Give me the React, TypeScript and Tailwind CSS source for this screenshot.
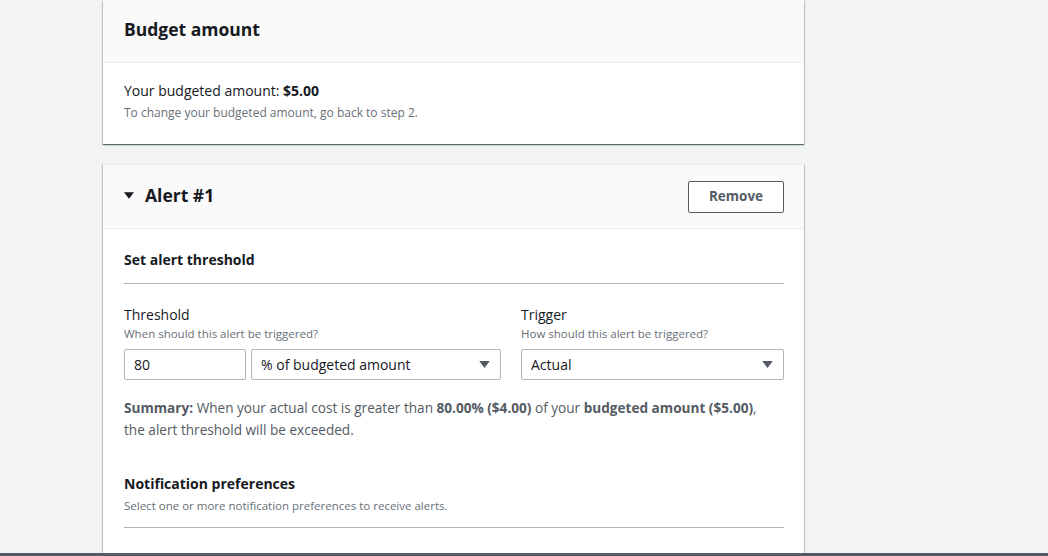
import React from 'react';

const font = { fontFamily: '"Open Sans", "Noto Sans", Arial, sans-serif' };

const Caret = ({ className }: { className?: string }) => (
    <svg viewBox="0 0 12 8" className={className} aria-hidden="true">
        <path d="M0 0 L12 0 L6 8 Z" fill="currentColor" />
    </svg>
);

const Select = ({ value, className }: { value: string; className?: string }) => (
    <div className={`flex h-[31px] items-center justify-between rounded-[2px] border border-[#aab7b8] bg-white pl-[9px] pr-[10px] text-[14px] text-[#16191f] ${className || ''}`}>
        <span>{value}</span>
        <Caret className="h-[7px] w-[11px] text-[#545b64]" />
    </div>
);

const cardShadow = 'shadow-[0_1px_1px_0_rgba(0,28,36,0.5),1px_1px_1px_0_rgba(0,28,36,0.15),-1px_1px_1px_0_rgba(0,28,36,0.15)]';

export default function App() {
    return (
        <div className="relative h-[556px] w-full overflow-hidden bg-[#f2f3f3]" style={font}>
            <div className="ml-[103px] flex w-[701px] flex-col gap-[20px]">
                <div className={`bg-white ${cardShadow}`}>
                    <div className="flex h-[63px] items-center border-b border-[#eaeded] bg-[#fafafa] pl-[21px] pr-[20px] pb-[3px]">
                        <h2 className="text-[17.5px] font-bold text-[#16191f]">Budget amount</h2>
                    </div>
                    <div className="pl-[21px] pr-[20px] pt-[17px] pb-[20px]">
                        <p className="text-[14px] leading-[22px] text-[#16191f]">Your budgeted amount: <b>$5.00</b></p>
                        <p className="text-[12px] leading-[22px] text-[#687078]">To change your budgeted amount, go back to step 2.</p>
                    </div>
                </div>

                <div className={`bg-white ${cardShadow} border-t border-[#eaeded]`}>
                    <div className="flex h-[64px] items-center justify-between border-b border-[#eaeded] bg-[#fafafa] pl-[21px] pr-[20px]">
                        <div className="flex items-center gap-[11px] pb-[3px]">
                            <Caret className="h-[7px] w-[10px] text-[#16191f]" />
                            <h2 className="text-[17.5px] font-bold text-[#16191f]">Alert #1</h2>
                        </div>
                        <button className="h-[32px] w-[96px] rounded-[2px] border border-[#545b64] bg-white text-[13.5px] font-bold text-[#545b64]">Remove</button>
                    </div>
                    <div className="pl-[21px] pr-[20px] pt-[20px]">
                        <h3 className="pb-[12px] text-[14px] font-bold leading-[22px] text-[#16191f]">Set alert threshold</h3>
                        <div className="border-t border-[#aab7b8]" />
                        <div className="mt-[21px] grid grid-cols-[377px_1fr] gap-[20px]">
                            <div>
                                <p className="text-[14px] leading-[20px] text-[#16191f]">Threshold</p>
                                <p className="text-[11.5px] leading-[18px] text-[#687078]">When should this alert be triggered?</p>
                                <div className="mt-[6px] flex gap-[5px]">
                                    <div className="flex h-[31px] w-[122px] items-center rounded-[2px] border border-[#aab7b8] pl-[9px] text-[14px] text-[#16191f]">80</div>
                                    <Select value="% of budgeted amount" className="flex-1" />
                                </div>
                            </div>
                            <div>
                                <p className="text-[14px] leading-[20px] text-[#16191f]">Trigger</p>
                                <p className="text-[11.5px] leading-[18px] text-[#687078]">How should this alert be triggered?</p>
                                <div className="mt-[6px]">
                                    <Select value="Actual" />
                                </div>
                            </div>
                        </div>
                        <p className="mt-[17px] text-[13.6px] leading-[22px] text-[#545b64]">
                            <b>Summary:</b> When your actual cost is greater than <b>80.00% ($4.00)</b> of your <b>budgeted amount ($5.00)</b>,
                            <br />the alert threshold will be exceeded.
                        </p>
                        <h3 className="mt-[32px] text-[14px] font-bold leading-[22px] text-[#16191f]">Notification preferences</h3>
                        <p className="text-[11.5px] leading-[22px] text-[#687078]">Select one or more notification preferences to receive alerts.</p>
                        <div className="mt-[10px] border-t border-[#aab7b8]" />
                        <div className="h-[40px]" />
                    </div>
                </div>
            </div>
            <div className="absolute bottom-0 left-0 h-[3px] w-full bg-[#545b64]" />
        </div>
    );
}
